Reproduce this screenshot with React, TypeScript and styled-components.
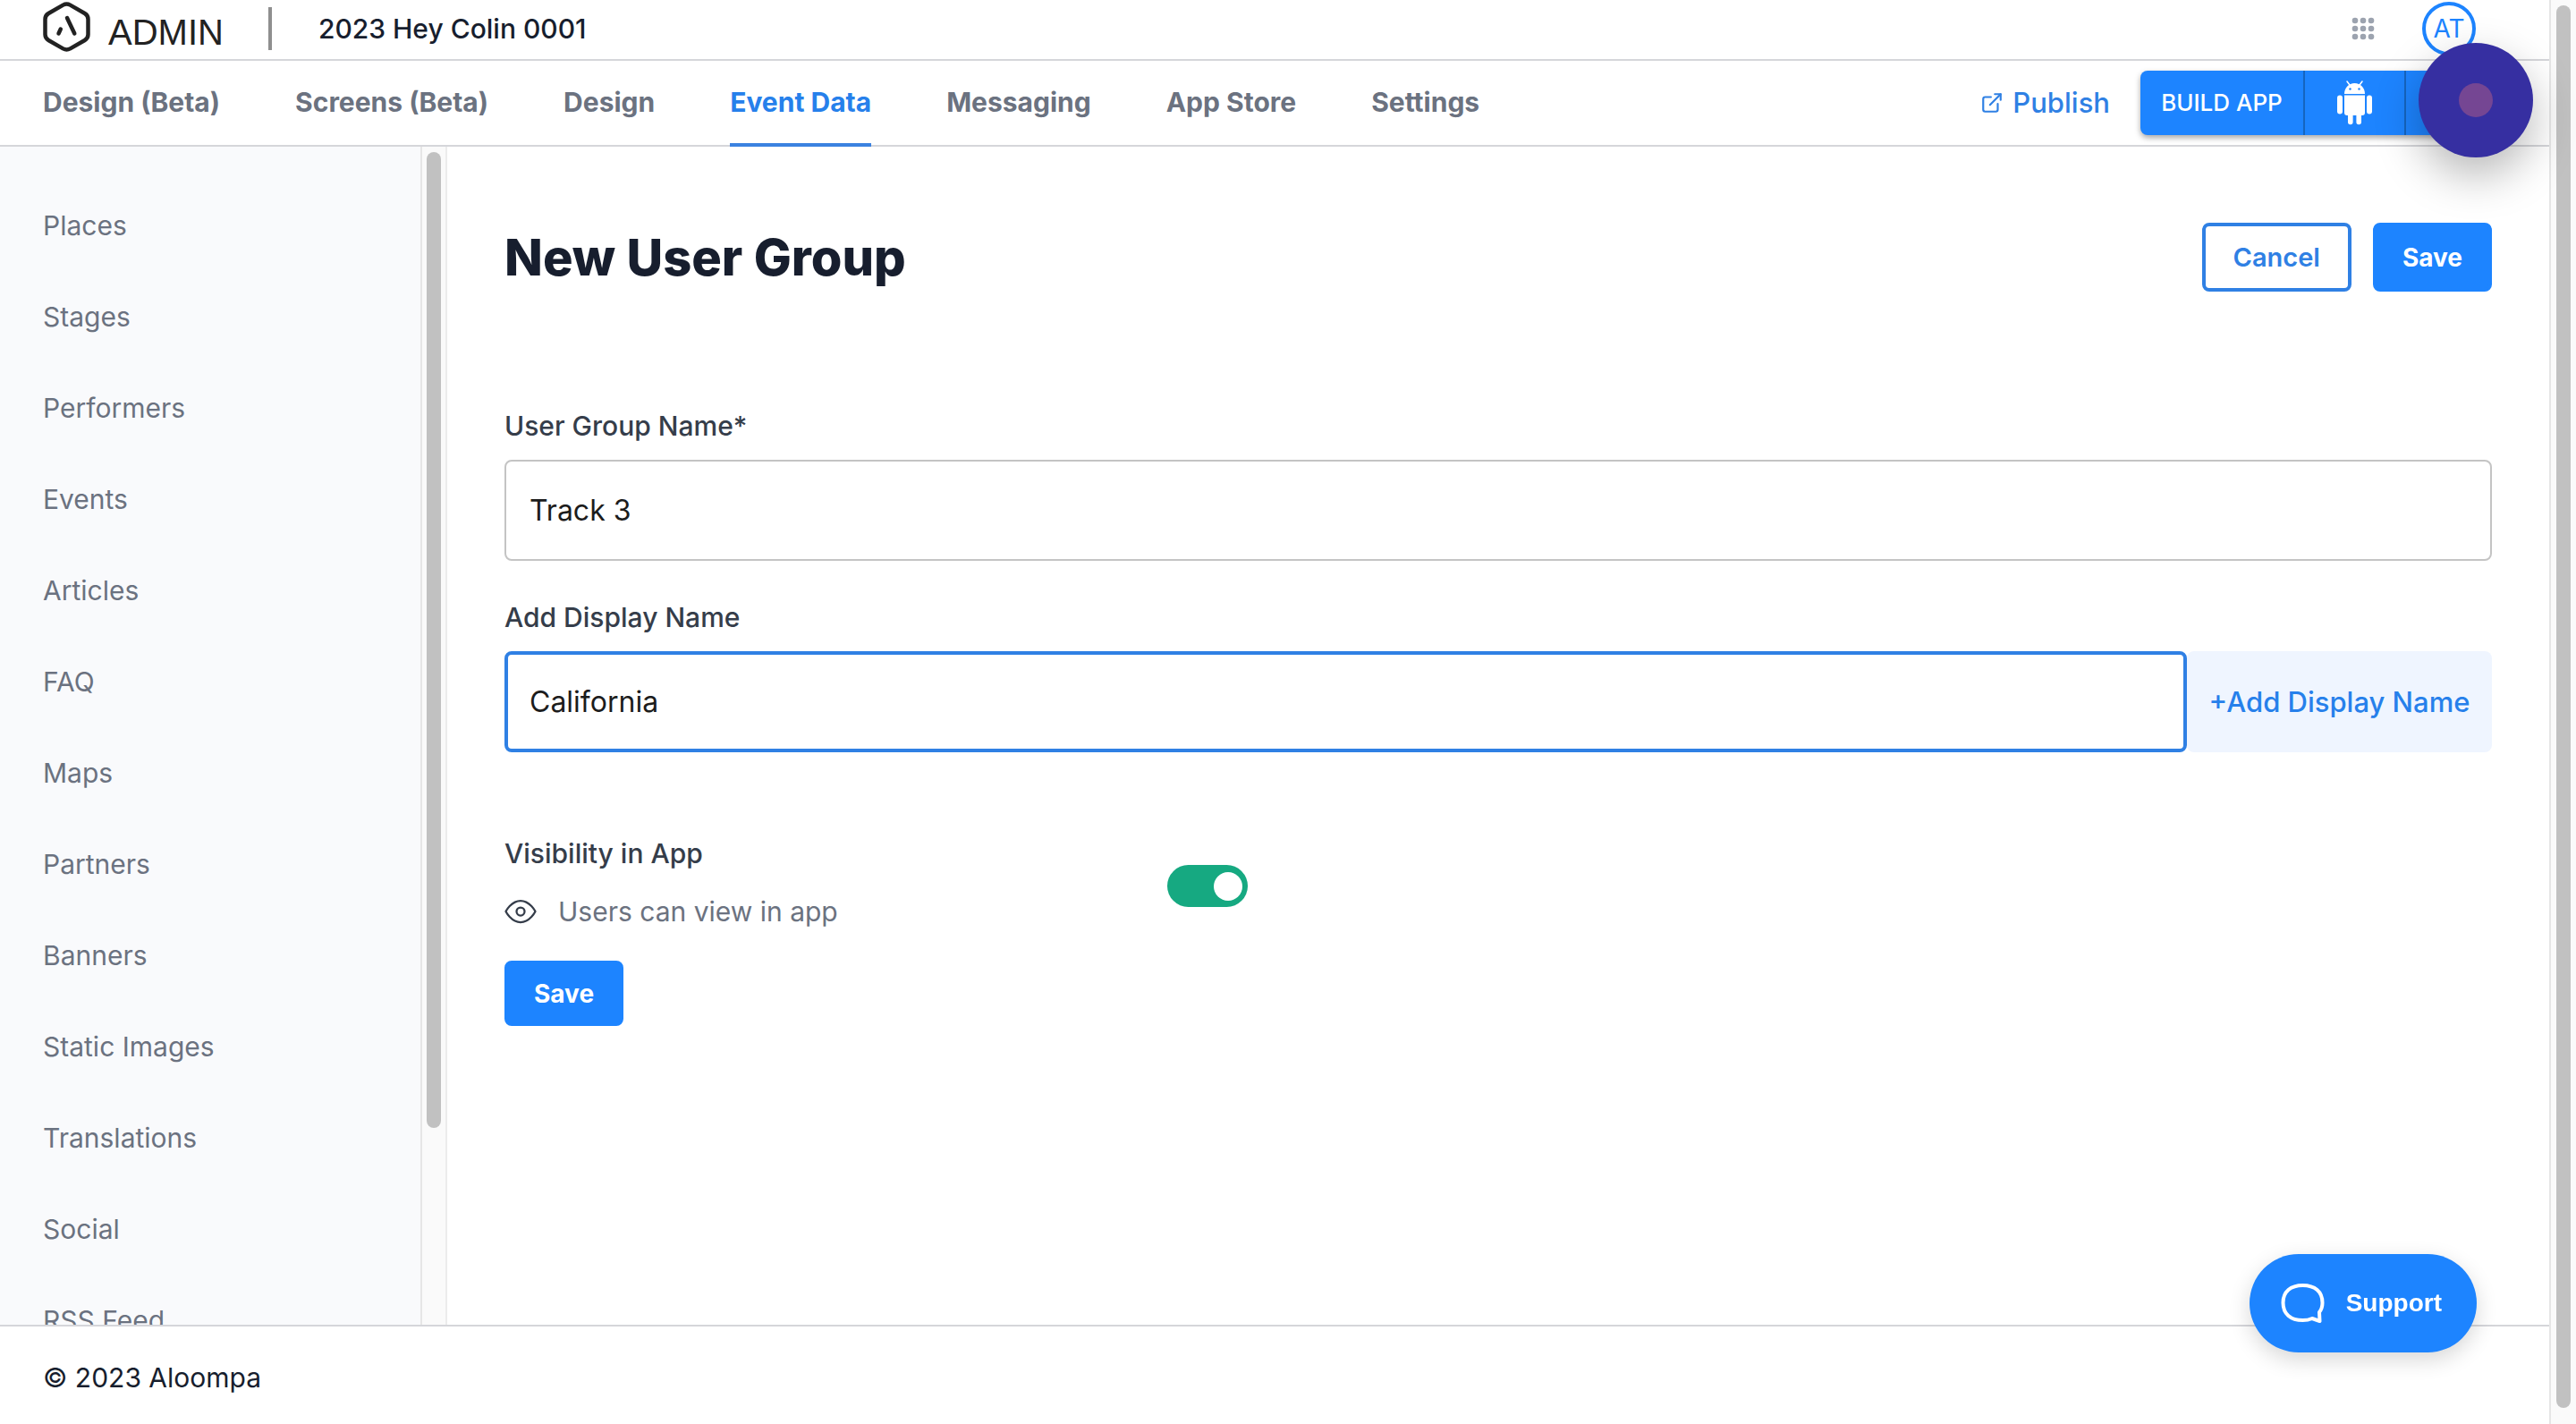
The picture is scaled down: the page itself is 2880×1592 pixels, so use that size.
import React, { useState } from "react";
import styled, { createGlobalStyle, css } from "styled-components";
import { FiExternalLink, FiEye } from "react-icons/fi";

const blue = "#1d84ff";
const ink = "#171e2e";
const slate = "#353d4a";
const grey = "#6b7280";
const line = "#d5d6da";

const GlobalStyle = createGlobalStyle`
  *, *::before, *::after { box-sizing: border-box; }
  body { margin: 0; background: #fff; color: ${ink}; font-family: Inter, "Liberation Sans", sans-serif; font-size: 30px; line-height: 40px; overflow: hidden; }
  button, input { font: inherit; }
  a { color: inherit; text-decoration: none; }
`;

const Shell = styled.div`
  display: grid;
  grid-template-columns: minmax(0, 1fr) 30px;
  height: 100vh;
`;
const Page = styled.div`
  display: grid;
  grid-template-rows: 68px 96px minmax(0, 1fr) 111px;
  height: 100vh;
  min-width: 0;
`;
const Track = styled.div<{ $top: number; $bottom: number }>`
  display: flex;
  justify-content: center;
  padding: ${(p) => p.$top}px 0 ${(p) => p.$bottom}px;
  background: #fafafa;
  border-left: 2px solid #e6e6e6;
`;
const SideTrack = styled(Track)`
  flex: 0 0 30px;
  border-right: 2px solid #ececec;
`;
const Thumb = styled.div<{ $share: number }>`
  width: 16px;
  height: ${(p) => p.$share}%;
  border-radius: 8px;
  background: #c1c1c1;
`;

const TopBar = styled.header`
  display: flex;
  align-items: center;
  padding: 0 82px 2px 48px;
  border-bottom: 2px solid ${line};
`;
const Brand = styled.a`
  display: flex;
  align-items: flex-start;
  gap: 20px;
  height: 60px;
  color: #222;
  font-size: 40px;
`;
const BrandName = styled.span`
  font-family: "Liberation Sans", Arial, sans-serif;
  padding-top: 14px;
`;
const Divider = styled.span`
  width: 4px;
  height: 48px;
  margin: 0 52px 0 50px;
  background: #8f8f8f;
`;
const EventName = styled.span`
  flex: 1;
  font-weight: 500;
`;
const Apps = styled.button`
  display: flex;
  padding: 0;
  border: 0;
  background: none;
  color: #9ca3af;
`;
const Avatar = styled.button`
  width: 60px;
  height: 60px;
  margin-left: 53px;
  padding: 0;
  border: 4px solid ${blue};
  border-radius: 50%;
  background: #fff;
  color: ${blue};
  font-size: 28px;
`;

const NavBar = styled.div`
  display: flex;
  justify-content: space-between;
  align-items: stretch;
  padding: 0 48px;
  border-bottom: 2px solid ${line};
`;
const Tabs = styled.nav`
  display: flex;
  gap: 84px;
  margin-bottom: -2px;
`;
const Tab = styled.a<{ $active?: boolean }>`
  display: flex;
  align-items: center;
  border-bottom: 4px solid ${(p) => (p.$active ? "#3b82e0" : "transparent")};
  color: ${(p) => (p.$active ? "#2680eb" : grey)};
  font-weight: 700;
`;
const Actions = styled.div`
  display: flex;
  align-items: center;
  gap: 34px;
`;
const Publish = styled.a`
  display: flex;
  align-items: center;
  gap: 10px;
  color: #2f80e4;
  font-size: 31px;
  font-weight: 500;
`;
const BuildGroup = styled.div`
  display: flex;
  height: 72px;
  border-radius: 8px;
  background: ${blue};
  box-shadow: 0 3px 6px rgba(0, 0, 0, 0.35);
`;
const BuildButton = styled.button<{ $width: number }>`
  display: flex;
  align-items: center;
  justify-content: center;
  width: ${(p) => p.$width}px;
  padding: 0;
  border: 0;
  border-right: 2px solid #1565c0;
  background: none;
  color: #fff;
  font-size: 26px;
  font-weight: 500;
  &:last-child { border-right: 0; }
`;

const Body = styled.div`
  display: flex;
  min-height: 0;
`;
const SideNav = styled.nav`
  flex: 0 0 470px;
  overflow: hidden;
  padding: 37px 48px 0;
  background: #f9fafc;
`;
const SideLink = styled.a`
  display: block;
  height: 102px;
  line-height: 102px;
  color: ${grey};
`;
const Main = styled.main`
  flex: 1;
  min-width: 0;
  padding: 85px 64px 0;
`;
const Heading = styled.div`
  display: flex;
  justify-content: space-between;
  align-items: center;
`;
const Title = styled.h1`
  margin: 0;
  font-size: 56px;
  line-height: 72px;
  font-weight: 800;
`;
const Buttons = styled.div`
  display: flex;
  gap: 24px;
`;
const Button = styled.button<{ $outline?: boolean; $tall?: boolean }>`
  height: ${(p) => (p.$tall ? 77 : 73)}px;
  padding: 0 29px;
  border: 4px solid ${blue};
  border-radius: 8px;
  background: ${blue};
  color: #fff;
  font-size: 28px;
  font-weight: 700;
  ${(p) =>
    p.$outline &&
    css`
      padding: 0 31px;
      background: #fff;
      border-color: #2f80e4;
      color: #2f80e4;
      font-size: 29px;
      font-weight: 600;
    `}
`;
const Label = styled.label`
  display: block;
  margin-bottom: 18px;
  color: ${slate};
  font-weight: 500;
`;
const Form = styled.form`
  padding-top: 130px;
`;
const Field = styled.div`
  margin-bottom: 43px;
`;
const TextInput = styled.input<{ $focused?: boolean }>`
  display: block;
  flex: 1;
  width: 100%;
  min-width: 0;
  height: 113px;
  padding: 0 ${(p) => (p.$focused ? 24 : 26)}px;
  border: ${(p) => (p.$focused ? "4px solid #2f80e4" : "2px solid #c4c4c4")};
  border-radius: 8px;
  outline: 0;
  background: #fff;
  color: #1c1c1c;
  font-size: 32px;
`;
const InputRow = styled.div`
  display: flex;
`;
const AddButton = styled.button`
  width: 341px;
  padding: 0;
  border: 0;
  border-radius: 8px;
  background: #eff5ff;
  color: #2680eb;
  font-size: 31px;
  font-weight: 500;
`;
const Visibility = styled.div`
  display: flex;
  align-items: center;
  width: 831px;
  justify-content: space-between;
  margin: 93px 0 35px;
`;
const VisibilityName = styled.label`
  display: block;
  color: ${slate};
  font-weight: 500;
`;
const Hint = styled.div`
  display: flex;
  align-items: center;
  gap: 24px;
  margin-top: 25px;
  color: ${slate};
  span { color: ${grey}; }
`;
const Switch = styled.input`
  appearance: none;
  width: 90px;
  height: 47px;
  margin: 8px 0 0;
  padding: 8px;
  border-radius: 24px;
  background: #9ca3af;
  &::before {
    content: "";
    display: block;
    width: 32px;
    height: 32px;
    border-radius: 50%;
    background: #fff;
  }
  &:checked { background: #16a981; }
  &:checked::before { margin-left: 44px; }
`;
const Footer = styled.footer`
  display: flex;
  align-items: center;
  padding: 4px 48px 0;
  border-top: 2px solid ${line};
`;
const Recorder = styled.button`
  position: fixed;
  top: 48px;
  right: 48px;
  display: flex;
  align-items: center;
  justify-content: center;
  width: 128px;
  height: 128px;
  border: 0;
  border-radius: 50%;
  background: #362fa1;
  box-shadow: 0 20px 50px rgba(0, 0, 0, 0.28);
  &::before {
    content: "";
    width: 38px;
    height: 38px;
    border-radius: 50%;
    background: #754693;
  }
`;
const Support = styled.button`
  position: fixed;
  right: 111px;
  bottom: 80px;
  display: flex;
  align-items: center;
  gap: 24px;
  height: 110px;
  padding: 0 39px 0 35px;
  border: 0;
  border-radius: 55px;
  background: ${blue};
  box-shadow: 0 8px 24px rgba(0, 0, 0, 0.16);
  color: #fff;
  font-family: "Liberation Sans", Arial, sans-serif;
  font-size: 28px;
  font-weight: 700;
`;

const Logo = () => (
  <svg width="53" height="56" viewBox="0 0 53 56" fill="none" stroke="#222" strokeLinejoin="round" strokeLinecap="round">
    <path d="M22.5 3.6Q26.5 1.4 30.5 3.6L46.8 13Q50.5 15.2 50.5 19.5V36.5Q50.5 40.8 46.8 43L30.5 52.4Q26.5 54.6 22.5 52.4L6.2 43Q2.5 40.8 2.5 36.5V19.5Q2.5 15.2 6.2 13Z" strokeWidth="4.5" />
    <path d="M27 18L35.3 35.5" strokeWidth="4.500" />
    <path d="M19.8 30.5L17.500 35.500" strokeWidth="4.500" />
  </svg>
);
const Dots = () => (
  <svg width="26" height="26" viewBox="0 0 26 26" fill="currentColor">
    {[4, 13, 22].map((y) => [4, 13, 22].map((x) => <circle key={`${x}-${y}`} cx={x} cy={y} r="3.300" />))}
  </svg>
);
const Android = () => (
  <svg width="42" height="50" viewBox="0 0 42 50" fill="#fff">
    <path d="M9 15C9 8 14 3 20.500 3S32 8 32 15Z" />
    <path d="M15 5L12 1M26 5L29 1" stroke="#fff" strokeWidth="1.500" strokeLinecap="round" />
    <circle cx="15.500" cy="9.500" r="1.200" fill={blue} />
    <circle cx="25.500" cy="9.500" r="1.200" fill={blue} />
    <path d="M9 16.500H32V36Q32 39 29 39H28V46.500A2.800 2.800 0 0 1 22.400 46.500V39H18.600V46.500A2.800 2.800 0 0 1 13 46.500V39H12Q9 39 9 36Z" />
    <rect x="1" y="16.500" width="6" height="21" rx="3" />
    <rect x="34" y="16.500" width="6" height="21" rx="3" />
  </svg>
);
const Bubble = () => (
  <svg width="49" height="46" viewBox="0 0 49 46" fill="none" stroke="#fff" strokeWidth="4" strokeLinejoin="round">
    <path d="M43 33C45.500 30 46.500 26.500 46.500 22.500C46.500 10 38 3 24.500 3S2.500 10 2.500 22.500S11 42 24.500 42C28.500 42 32 41.300 35 40L43.500 43Z" />
  </svg>
);

const tabs = ["Design (Beta)", "Screens (Beta)", "Design", "Event Data", "Messaging", "App Store", "Settings"];
const sections = ["Places", "Stages", "Performers", "Events", "Articles", "FAQ", "Maps", "Partners", "Banners", "Static Images", "Translations", "Social", "RSS Feed"];

export default function App() {
  const [groupName, setGroupName] = useState("Track 3");
  const [displayName, setDisplayName] = useState("California");
  const [visible, setVisible] = useState(true);
  return (
    <Shell>
      <GlobalStyle />
      <Page>
        <TopBar>
          <Brand href="#"><Logo /><BrandName>ADMIN</BrandName></Brand>
          <Divider />
          <EventName>2023 Hey Colin 0001</EventName>
          <Apps aria-label="Apps"><Dots /></Apps>
          <Avatar>AT</Avatar>
        </TopBar>
        <NavBar>
          <Tabs>
            {tabs.map((t) => <Tab key={t} href="#" $active={t === "Event Data"}>{t}</Tab>)}
          </Tabs>
          <Actions>
            <Publish href="#"><FiExternalLink size={26} />Publish</Publish>
            <BuildGroup>
              <BuildButton $width={184}>BUILD APP</BuildButton>
              <BuildButton $width={113} aria-label="Android"><Android /></BuildButton>
              <BuildButton $width={112} aria-label="iOS" />
            </BuildGroup>
          </Actions>
        </NavBar>
        <Body>
          <SideNav>
            {sections.map((s) => <SideLink key={s} href="#">{s}</SideLink>)}
          </SideNav>
          <SideTrack $top={6} $bottom={12}><Thumb $share={84} /></SideTrack>
          <Main>
            <Heading>
              <Title>New User Group</Title>
              <Buttons>
                <Button $tall $outline type="button">Cancel</Button>
                <Button $tall type="submit" form="group">Save</Button>
              </Buttons>
            </Heading>
            <Form id="group" onSubmit={(e) => e.preventDefault()}>
              <Field>
                <Label htmlFor="name">User Group Name*</Label>
                <TextInput id="name" value={groupName} onChange={(e) => setGroupName(e.target.value)} />
              </Field>
              <Field>
                <Label htmlFor="display">Add Display Name</Label>
                <InputRow>
                  <TextInput id="display" $focused value={displayName} onChange={(e) => setDisplayName(e.target.value)} />
                  <AddButton type="button">+Add Display Name</AddButton>
                </InputRow>
              </Field>
              <Visibility>
                <div>
                  <VisibilityName htmlFor="visible">Visibility in App</VisibilityName>
                  <Hint><FiEye size={36} strokeWidth={1.5} /><span>Users can view in app</span></Hint>
                </div>
                <Switch id="visible" type="checkbox" checked={visible} onChange={(e) => setVisible(e.target.checked)} />
              </Visibility>
              <Button type="submit">Save</Button>
            </Form>
          </Main>
        </Body>
        <Footer>© 2023 Aloompa</Footer>
      </Page>
      <Track $top={6} $bottom={18}><Thumb $share={100} /></Track>
      <Recorder aria-label="Record" />
      <Support><Bubble />Support</Support>
    </Shell>
  );
}
